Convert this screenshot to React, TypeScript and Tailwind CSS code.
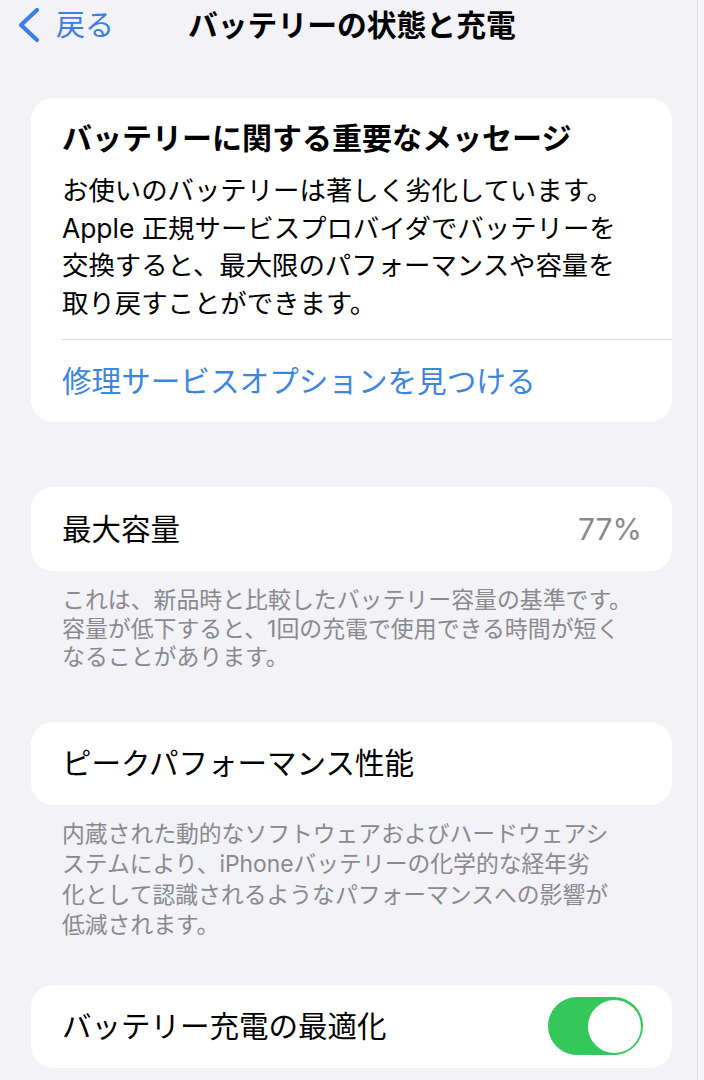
const font = { fontFamily: 'Inter, "Noto Sans CJK JP", sans-serif' };

function Footnote({ lines, className }: { lines: string[]; className: string }) {
  return (
    <div className={`pl-[62px] text-[#8a8a8e] ${className}`}>
      {lines.map((l) => (
        <p key={l} className="whitespace-nowrap">
          {l}
        </p>
      ))}
    </div>
  );
}

function Card({ children, className = '' }: { children: React.ReactNode; className?: string }) {
  return <div className={`bg-white rounded-[22px] ${className}`}>{children}</div>;
}

export default function App() {
  return (
    <div className="flex w-[704px] h-[1080px] overflow-hidden bg-[#f2f2f7]" style={font}>
      <div className="w-[697px] shrink-0">
        {/* Nav bar */}
        <div className="relative flex items-center h-[50px]">
          <div className="flex items-center pl-[16px] text-[#3a7ee8]">
            <svg width="26" height="36" viewBox="0 0 26 36" fill="none">
              <path
                d="M21 3 L5 18 L21 33"
                stroke="currentColor"
                strokeWidth={4.2}
                strokeLinecap="round"
                strokeLinejoin="round"
              />
            </svg>
            <span className="ml-[14px] text-[29px] leading-none">戻る</span>
          </div>
          <h1 className="absolute left-[188px] top-[5px] text-[29.8px] font-bold text-black leading-[40px]">
            バッテリーの状態と充電
          </h1>
        </div>

        <div className="ml-[31px] mr-[25px] mt-[48px]">
          {/* Important message */}
          <Card className="pt-[22px]">
            <div className="px-[31px]">
              <h2 className="text-[30px] font-bold leading-[36px] text-black">
                バッテリーに関する重要なメッセージ
              </h2>
              <div className="mt-[16px] text-[26.4px] leading-[37.5px] text-black whitespace-nowrap">
                <p>お使いのバッテリーは著しく劣化しています。</p>
                <p>Apple 正規サービスプロバイダでバッテリーを</p>
                <p>交換すると、最大限のパフォーマンスや容量を</p>
                <p>取り戻すことができます。</p>
              </div>
            </div>
            <div className="ml-[31px] mt-[17px] border-t border-[#dcdce0]" />
            <div className="flex items-center h-[82px] px-[31px] text-[29.6px] text-[#3d86e0]">
              修理サービスオプションを見つける
            </div>
          </Card>

          {/* Maximum capacity */}
          <Card className="mt-[65px] h-[84px] flex items-center justify-between pl-[31px] pr-[30px]">
            <span className="text-[29.5px] text-black">最大容量</span>
            <span className="text-[30px] text-[#8a8a8e]">77%</span>
          </Card>
        </div>
        <Footnote
          className="mt-[15px] text-[22.9px] leading-[28.5px]"
          lines={[
            'これは、新品時と比較したバッテリー容量の基準です。',
            '容量が低下すると、1回の充電で使用できる時間が短く',
            'なることがあります。',
          ]}
        />

        <div className="ml-[31px] mr-[25px] mt-[50px]">
          <Card className="h-[83px] flex items-center px-[31px]">
            <span className="text-[29.5px] text-black">ピークパフォーマンス性能</span>
          </Card>
        </div>
        <Footnote
          className="mt-[14px] text-[22.8px] leading-[30.5px]"
          lines={[
            '内蔵された動的なソフトウェアおよびハードウェアシ',
            'ステムにより、iPhoneバッテリーの化学的な経年劣',
            '化として認識されるようなパフォーマンスへの影響が',
            '低減されます。',
          ]}
        />

        <div className="ml-[31px] mr-[25px] mt-[44px]">
          <Card className="h-[83px] flex items-center justify-between pl-[31px] pr-[29px]">
            <span className="text-[29.5px] text-black">バッテリー充電の最適化</span>
            {/* Switch */}
            <div className="w-[95px] h-[58px] rounded-full bg-[#34c759] flex items-center justify-end p-[2.5px]">
              <div className="w-[53px] h-[53px] rounded-full bg-white" />
            </div>
          </Card>
        </div>
      </div>
      <div className="w-px shrink-0 bg-[#dedee3]" />
      <div className="flex-1 bg-[#f6f6fa]" />
    </div>
  );
}
